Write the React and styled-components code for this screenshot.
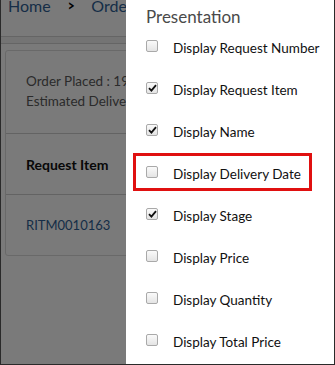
import React from "react";
import styled, { createGlobalStyle } from "styled-components";

const Global = createGlobalStyle`
  html, body { margin: 0; padding: 0; background: #fff; }
  body { font-family: Lato, "Open Sans", sans-serif; }
`;

const Frame = styled.div`
  position: relative;
  width: 335px;
  height: 365px;
  box-sizing: border-box;
  border: 1px solid #2a2a2a;
  border-top: none;
  overflow: hidden;
  background: #fff;
`;

const Page = styled.div`
  display: flex;
  flex-direction: column;
  height: 100%;
`;

const Breadcrumb = styled.div`
  display: flex;
  align-items: center;
  gap: 16px;
  height: 14px;
  padding: 0 0 0 7px;
  margin-top: -2px;
  font-size: 16px;
  color: #2f5f95;
  white-space: nowrap;
`;

const Chevron = styled.span`
  color: #000;
  font-weight: 900;
  font-size: 15px;
  transform: scaleX(0.8);
`;

const Band = styled.div`
  margin-top: 24px;
  height: 6px;
  border-top: 1px solid #d4d4d4;
  border-bottom: 1px solid #d4d4d4;
  background: #f2f2f2;
`;

const Card = styled.div`
  margin: 6px 0 0 4px;
  border: 1px solid #dcdcdc;
  border-radius: 3px;
  width: 360px;
  display: flex;
  flex-direction: column;
`;

const Summary = styled.div`
  padding: 20px 0 22px 20px;
  font-size: 13.5px;
  line-height: 20px;
  color: #5a5a5a;
  border-bottom: 1px solid #d0d0d0;
  white-space: nowrap;
`;

const HeadCell = styled.div`
  padding: 0 0 0 20px;
  height: 60px;
  display: flex;
  align-items: center;
  font-weight: 700;
  font-size: 14px;
  color: #111;
  border-bottom: 1px solid #d0d0d0;
`;

const LinkCell = styled.div`
  padding: 0 0 0 20px;
  height: 60px;
  display: flex;
  align-items: center;
  font-size: 13px;
  color: #2f5f95;
`;

const Overlay = styled.div`
  position: absolute;
  inset: 0;
  background: rgba(0, 0, 0, 0.52);
`;

const Drawer = styled.div`
  position: absolute;
  top: 0;
  bottom: 0;
  left: 125px;
  right: 0;
  background: #fff;
  padding: 6px 0 0 20px;
  display: flex;
  flex-direction: column;
`;

const Title = styled.div`
  font-size: 17px;
  color: #4a4a4a;
  height: 22px;
  line-height: 22px;
`;

const List = styled.div`
  display: flex;
  flex-direction: column;
  margin-top: -1px;
`;

const Row = styled.label`
  position: relative;
  display: flex;
  align-items: center;
  gap: 15px;
  height: 42px;
  font-size: 13.5px;
  color: #111;
`;

const Box = styled.span`
  width: 12px;
  height: 12px;
  box-sizing: border-box;
  border: 1px solid #a9a9a9;
  border-radius: 2px;
  background: linear-gradient(#fafafa, #e4e4e4);
  display: flex;
  align-items: center;
  justify-content: center;
  margin-top: -4px;
`;

const Highlight = styled.span`
  position: absolute;
  left: -13px;
  top: 0;
  width: 179px;
  height: 38px;
  box-sizing: border-box;
  border: 3px solid #e01010;
`;

const items = [
  ["Display Request Number", false],
  ["Display Request Item", true],
  ["Display Name", true],
  ["Display Delivery Date", false, true],
  ["Display Stage", true],
  ["Display Price", false],
  ["Display Quantity", false],
  ["Display Total Price", false],
];

function Check() {
  return (
    <svg width="9" height="8" viewBox="0 0 9 8">
      <path d="M1 4.2 L3.4 6.6 L8 1.2" fill="none" stroke="#111" strokeWidth="1.8" />
    </svg>
  );
}

export default function App() {
  return (
    <Frame>
      <Global />
      <Page>
        <Breadcrumb>
          <span>Home</span>
          <Chevron>&gt;</Chevron>
          <span>Order</span>
        </Breadcrumb>
        <Band />
        <Card>
          <Summary>
            <div>Order Placed : 19/06/2018</div>
            <div>Estimated Delivery : 21/06/2018</div>
          </Summary>
          <HeadCell>Request Item</HeadCell>
          <LinkCell>RITM0010163</LinkCell>
        </Card>
      </Page>
      <Overlay />
      <Drawer>
        <Title>Presentation</Title>
        <List>
          {items.map(([label, checked, hl]) => (
            <Row key={label}>
              {hl && <Highlight />}
              <Box>{checked && <Check />}</Box>
              <span>{label}</span>
            </Row>
          ))}
        </List>
      </Drawer>
    </Frame>
  );
}
